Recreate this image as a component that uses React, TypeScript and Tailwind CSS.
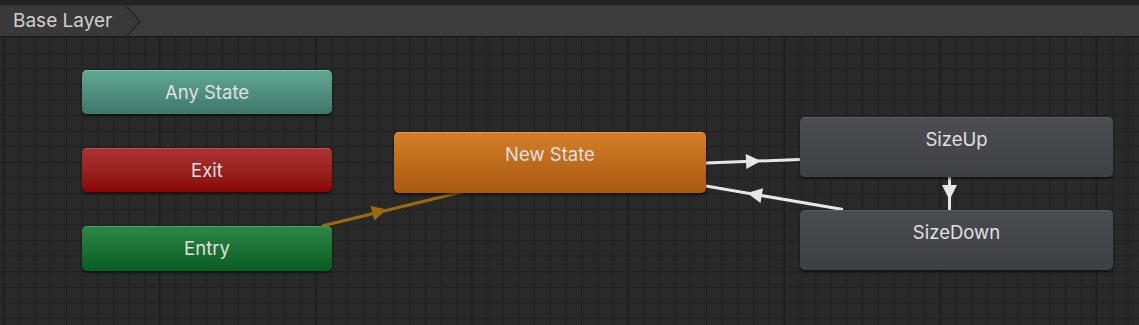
import type { ReactNode } from 'react';

type Pt = [number, number];

const nodes: Array<{ label: string; left: number; top: number; w: number; h: number; tone: string }> = [
  { label: 'Any State', left: 82, top: 33, w: 250, h: 44, tone: 'bg-linear-to-b from-[#60a893] to-[#3f776a] border-t-[#7cbcaa]' },
  { label: 'Exit', left: 82, top: 111, w: 250, h: 44, tone: 'bg-linear-to-b from-[#aa3434] to-[#880404] border-t-[#c05050]' },
  { label: 'Entry', left: 82, top: 189, w: 250, h: 45, tone: 'bg-linear-to-b from-[#2d8646] to-[#055e20] border-t-[#45a060]' },
  { label: 'New State', left: 394, top: 95, w: 312, h: 61, tone: 'bg-linear-to-b from-[#d67e27] to-[#a65910] border-t-[#e8984a]' },
  { label: 'SizeUp', left: 800, top: 80, w: 313, h: 60, tone: 'bg-linear-to-b from-[#4c4d51] to-[#3f4044] border-t-[#5c5d61]' },
  { label: 'SizeDown', left: 800, top: 173, w: 313, h: 60, tone: 'bg-linear-to-b from-[#4a4b4f] to-[#3f4044] border-t-[#5a5b5f]' },
];

// arrow head triangle: tip point, direction from tail to tip
function head(tip: Pt, from: Pt, len = 15, half = 7.5) {
  const dx = tip[0] - from[0];
  const dy = tip[1] - from[1];
  const d = Math.hypot(dx, dy);
  const ux = dx / d;
  const uy = dy / d;
  const bx = tip[0] - ux * len;
  const by = tip[1] - uy * len;
  return `${tip[0]},${tip[1]} ${bx - uy * half},${by + ux * half} ${bx + uy * half},${by - ux * half}`;
}

function Transition({ a, b, tip, color }: { a: Pt; b: Pt; tip: Pt; color: string }) {
  return (
    <g>
      <line x1={a[0]} y1={a[1]} x2={b[0]} y2={b[1]} stroke={color} strokeWidth={3} />
      <polygon points={head(tip, a)} fill={color} />
    </g>
  );
}

function StateNode({ label, left, top, w, h, tone }: (typeof nodes)[number]): ReactNode {
  return (
    <div
      className={`absolute rounded-[5px] border-t border-transparent shadow-[0_2px_3px_rgba(0,0,0,0.55)] ${tone}`}
      style={{ left, top, width: w, height: h }}
    >
      <div className="h-[43px] text-center text-[18.5px] leading-[43px] text-[#e0e0e0]">{label}</div>
    </div>
  );
}

export default function App() {
  return (
    <div className="flex h-[325px] w-[1139px] flex-col overflow-hidden bg-[#292929] font-['Inter','Noto_Sans',sans-serif]">
      <div className="h-[5px] bg-[#232323]" />
      <div className="flex h-[31px] items-stretch bg-[#3c3c3c] border-t border-[#333333]">
        <div className="flex items-center bg-[#393939] pl-[13px] pr-[13px] pt-[1px] text-[19px] text-[#cfcfcf]">Base Layer</div>
        <svg width="18" height="31" className="-ml-[1px] block">
          <polygon points="0,0 2,0 16,15.5 2,31 0,31" fill="#393939" />
          <polyline points="2,0 16,15.5 2,31" fill="none" stroke="#262626" strokeWidth="1.5" />
        </svg>
      </div>
      <div className="h-[1px] bg-[#1c1c1c]" />
      <div className="relative flex-1">
        <svg className="absolute inset-0" width="1139" height="288">
          <defs>
            <pattern id="minor" x="3.5" y="15.7" width="15.61" height="15.61" patternUnits="userSpaceOnUse">
              <path d="M0.5 0 V15.61 M0 0.5 H15.61" stroke="#202020" strokeWidth="1" fill="none" />
            </pattern>
            <pattern id="major" x="3" y="0" width="156.1" height="600" patternUnits="userSpaceOnUse">
              <path d="M0.5 0 V600" stroke="#1b1b1b" strokeWidth="1.2" fill="none" />
            </pattern>
          </defs>
          <rect width="1139" height="288" fill="url(#minor)" />
          <rect width="1139" height="288" fill="url(#major)" />
          <Transition a={[322, 189]} b={[462, 155]} tip={[387, 172.5]} color="#9a6a0c" />
          <Transition a={[706, 126]} b={[800, 122.5]} tip={[761, 124]} color="#e6e6e6" />
          <Transition a={[843, 172.5]} b={[706, 149]} tip={[747, 156]} color="#e6e6e6" />
          <Transition a={[949.5, 140]} b={[949.5, 173]} tip={[949.5, 163]} color="#e6e6e6" />
        </svg>
        {nodes.map((n) => (
          <StateNode key={n.label} {...n} />
        ))}
      </div>
    </div>
  );
}
